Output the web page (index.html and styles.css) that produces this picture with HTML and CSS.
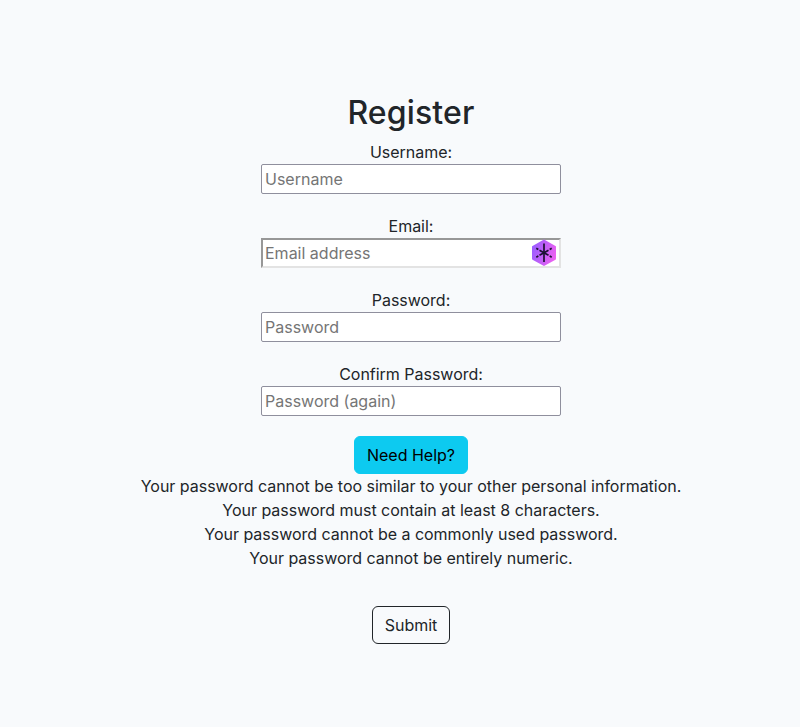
FILE: index.html
```html
<!DOCTYPE html>
<html lang="en">
<head>
<meta charset="utf-8">
<title>Register</title>
<link rel="stylesheet" href="styles.css">
</head>
<body>
<form class="register">
  <h2 class="title">Register</h2>
  <div class="field">
    <label for="username">Username:</label>
    <input id="username" type="text" placeholder="Username">
  </div>
  <div class="field">
    <label for="email">Email:</label>
    <div class="email-box">
      <input id="email" class="inset" type="email" placeholder="Email address">
      <svg class="badge" viewBox="0 0 26 28" width="26" height="28">
        <defs><linearGradient id="g" gradientUnits="userSpaceOnUse" x1="1" y1="10" x2="25" y2="18"><stop offset="0" stop-color="#9b5cff"/><stop offset="1" stop-color="#ee62f0"/></linearGradient></defs>
        <path d="M13 1.600 24 7.800V19.800L13 26 2 19.800V7.800Z" fill="url(#g)" stroke="url(#g)" stroke-width="2" stroke-linejoin="round"/>
        <g fill="none" stroke="#1c1033" stroke-width="1.700">
          <path d="M13 4.500V23"/>
          <path d="M5.300 9.300 7.300 10.500M8.500 11.200 17.500 16.300M18.700 17 20.700 18.200"/>
          <path d="M5.300 18.200 7.300 17M8.500 16.300 17.500 11.200M18.700 10.500 20.700 9.300"/>
        </g>
      </svg>
    </div>
  </div>
  <div class="field">
    <label for="password">Password:</label>
    <input id="password" type="password" placeholder="Password">
  </div>
  <div class="field">
    <label for="confirm">Confirm Password:</label>
    <input id="confirm" type="password" placeholder="Password (again)">
  </div>
  <button type="button" class="btn help">Need Help?</button>
  <ul class="hints">
    <li>Your password cannot be too similar to your other personal information.</li>
    <li>Your password must contain at least 8 characters.</li>
    <li>Your password cannot be a commonly used password.</li>
    <li>Your password cannot be entirely numeric.</li>
  </ul>
  <button type="button" class="btn submit">Submit</button>
</form>
</body>
</html>
```
FILE: styles.css
```css
* { box-sizing: border-box; }
body {
  margin: 0;
  background: #f8fafc;
  color: #212529;
  font: 400 16px/24px Inter, sans-serif;
  letter-spacing: -0.02px;
}
.register {
  width: 600px;
  margin-left: 111px;
  padding-top: 93px;
  display: flex;
  flex-direction: column;
  align-items: center;
  text-align: center;
}
.title { margin: 0 0 8px; font-size: 32px; line-height: 39px; font-weight: 500; letter-spacing: 0.15px; }
.field { width: 300px; margin-bottom: 20px; }
.field label { display: block; }
.field input {
  display: block;
  width: 300px;
  height: 30px;
  margin: 0;
  padding: 1px 3px;
  border: 1px solid #8f8f9d;
  border-radius: 2px;
  background: #fff;
  color: #212529;
  font: inherit;
}
.field input::placeholder { color: #757575; opacity: 1; }
.field input.inset {
  border: 2px solid;
  border-color: #979797 #e3e3e3 #e3e3e3 #979797;
  border-radius: 0;
  padding: 1px 2px;
}
.email-box { position: relative; }
.badge { position: absolute; right: 4px; top: 1px; }
.btn {
  height: 38px;
  padding: 6px 12px;
  border: 1px solid #0dcaf0;
  border-radius: 6px;
  font: inherit;
}
.help { background: #0dcaf0; color: #000; }
.submit { background: transparent; border-color: #212529; color: #212529; }
.hints { margin: 0 0 36px; padding: 0; list-style: none; }
```
